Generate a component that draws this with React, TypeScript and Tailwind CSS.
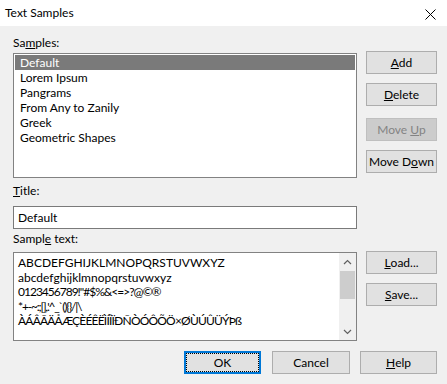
import React from "react";

const SAMPLES = [
    "Default",
    "Lorem Ipsum",
    "Pangrams",
    "From Any to Zanily",
    "Greek",
    "Geometric Shapes",
];

// sample text lines, with tracking to match the narrow dialog font
const SAMPLE_LINES = [
    { text: "ABCDEFGHIJKLMNOPQRSTUVWXYZ", cls: "" },
    { text: "abcdefghijklmnopqrstuvwxyz", cls: "" },
    { text: "0123456789!\"#$%&<=>?@©®", cls: "tracking-[-1px]" },
    { text: "*+-~:;[],.'^_`(){}/|\\", cls: "tracking-[-1.2px]" },
    { text: "ÀÁÂÃÄÅÆÇÈÉÊËÌÍÎÏÐÑÒÓÔÕÖ×ØÙÚÛÜÝÞß", cls: "tracking-[-0.8px]" },
];

const Btn = ({
    children,
    disabled = false,
    className = "",
}: {
    children: React.ReactNode;
    disabled?: boolean;
    className?: string;
}) => (
    <button
        className={`h-[23px] w-[71px] flex items-center justify-center border leading-none ${disabled
            ? "bg-[#cccccc] border-[#bfbfbf] text-[#838383]"
            : "bg-[#e1e1e1] border-[#adadad] text-black"
            } ${className}`}>
        {children}
    </button>
);

const App = () => {
    return (
        <div
            className="w-[447px] h-[384px] bg-[#f0f0f0] text-black text-[12px] overflow-hidden"
            style={{ fontFamily: 'Lato, "Noto Sans", sans-serif' }}>
            {/* title bar */}
            <div className="h-[26px] bg-white flex items-center justify-between pl-[5px] pr-[11px]">
                <span className="leading-none">Text Samples</span>
                <svg width="11" height="11" viewBox="0 0 11 11" className="mt-[3px]">
                    <path d="M0.5 0.5 L10.5 10.5 M10.5 0.5 L0.5 10.5" stroke="#000" strokeWidth="1" />
                </svg>
            </div>

            <div className="pl-[13px] pt-[8px]">
                <div className="flex gap-[9px]">
                    <div className="w-[344px]">
                        <div className="h-[17px] leading-[17px]">
                            Sa<u>m</u>ples:
                        </div>
                        <ul className="mt-[2px] h-[125px] bg-white border border-[#828282] p-[1px]">
                            {SAMPLES.map((s, i) => (
                                <li
                                    key={s}
                                    className={`h-[15px] leading-[15px] pl-[5px] ${i === 0 ? "bg-[#7a7a7a] text-white" : ""}`}>
                                    {s}
                                </li>
                            ))}
                        </ul>
                    </div>
                    <div className="flex flex-col pt-[17px]">
                        <Btn>
                            <u>A</u>dd
                        </Btn>
                        <Btn className="mt-[9px]">
                            <u>D</u>elete
                        </Btn>
                        <Btn disabled className="mt-[12px]">
                            Move&nbsp;<u>U</u>p
                        </Btn>
                        <Btn className="mt-[9px]">
                            Move D<u>o</u>wn
                        </Btn>
                    </div>
                </div>

                <div className="mt-[4px] h-[17px] leading-[17px]">
                    <u>T</u>itle:
                </div>
                <div className="mt-[7px] w-[344px] h-[23px] bg-white border border-[#7a7a7a] flex items-center pl-[4px]">
                    Default
                </div>
                <div className="mt-[1px] h-[17px] leading-[17px]">
                    Sampl<u>e</u> text:
                </div>

                <div className="mt-[4px] flex gap-[9px]">
                    <div className="mt-[1px] w-[344px] h-[89px] bg-white border border-[#828282] flex">
                        <div className="flex-1 pl-[4px] pt-[3px] leading-[14.5px] whitespace-nowrap overflow-hidden">
                            {SAMPLE_LINES.map((l) => (
                                <div key={l.text} className={l.cls}>
                                    {l.text}
                                </div>
                            ))}
                        </div>
                        <div className="w-[17px] flex flex-col bg-[#f0f0f0]">
                            <div className="h-[17px] flex items-center justify-center">
                                <svg width="9" height="6" viewBox="0 0 9 6">
                                    <path d="M1 5 L4.5 1.5 L8 5" fill="none" stroke="#606060" strokeWidth="1.2" />
                                </svg>
                            </div>
                            <div className="mt-[1px] mx-[1px] h-[28px] bg-[#cdcdcd]" />
                            <div className="flex-1" />
                            <div className="h-[17px] flex items-center justify-center">
                                <svg width="9" height="6" viewBox="0 0 9 6">
                                    <path d="M1 1 L4.5 4.5 L8 1" fill="none" stroke="#606060" strokeWidth="1.2" />
                                </svg>
                            </div>
                        </div>
                    </div>
                    <div className="flex flex-col">
                        <Btn>
                            <u>L</u>oad...
                        </Btn>
                        <Btn className="mt-[9px]">
                            <u>S</u>ave...
                        </Btn>
                    </div>
                </div>

                <div className="mt-[10px] flex justify-end pr-[10px]">
                    <button className="h-[23px] w-[77px] border-2 border-[#0078d7] bg-[#e1e1e1] flex">
                        <span className="flex-1 border border-dotted border-black flex items-center justify-center leading-none">
                            OK
                        </span>
                    </button>
                    <button className="ml-[11px] h-[23px] w-[78px] border border-[#adadad] bg-[#e1e1e1] flex items-center justify-center leading-none">
                        Cancel
                    </button>
                    <button className="ml-[10px] h-[23px] w-[77px] border border-[#adadad] bg-[#e1e1e1] flex items-center justify-center leading-none">
                        <u>H</u>elp
                    </button>
                </div>
            </div>
        </div>
    );
};

export default App;
